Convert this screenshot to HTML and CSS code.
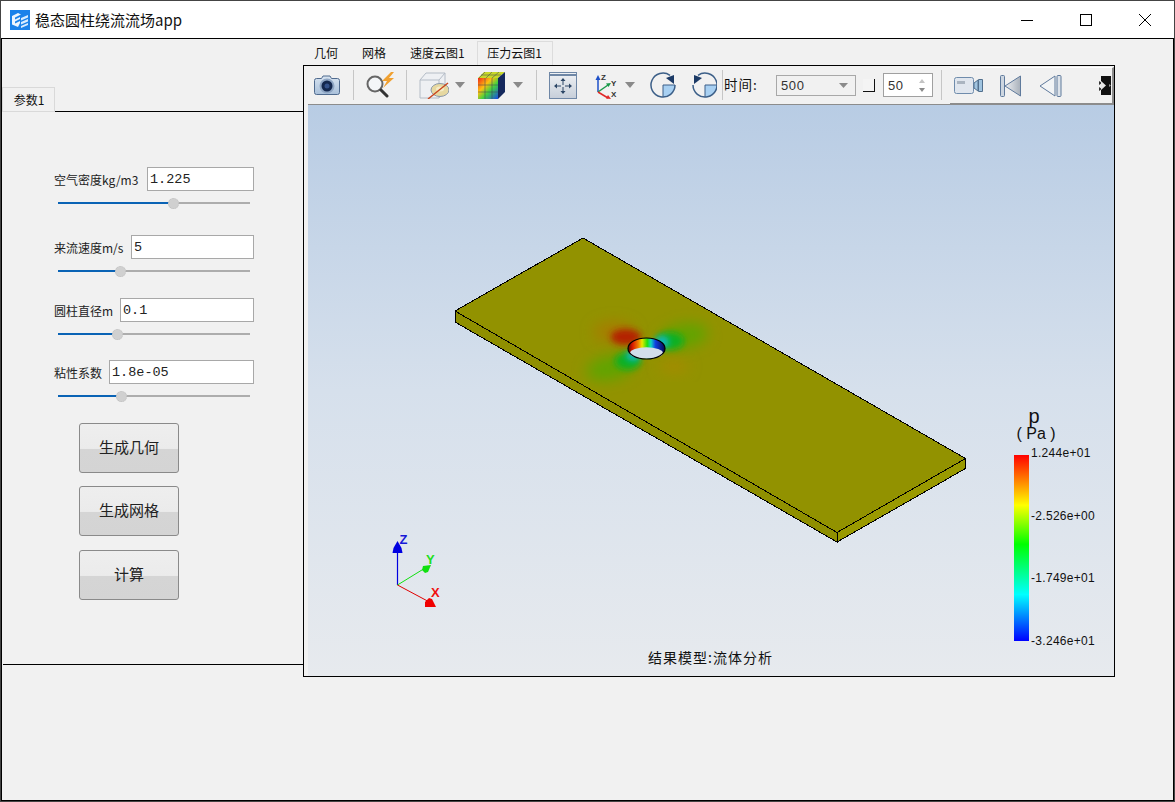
FILE: index.html
```html
<!DOCTYPE html>
<html lang="zh">
<head>
<meta charset="utf-8">
<title>稳态圆柱绕流流场app</title>
<link rel="stylesheet" href="styles.css">
</head>
<body>
<div class="app">
  <header class="titlebar">
    <svg class="app-icon" width="20" height="20" viewBox="0 0 20 20">
      <rect width="20" height="20" fill="#1b82ea"/>
      <path d="M2 6 8 3l3 1.500-6 3v2l5-2.500v2l-5 2.500v2l5-2.500v2L8 17l-6-2.500z" fill="#fff" opacity=".92"/>
      <path d="M11 8l7-3v2.500l-7 3zM11 12l7-3v2.500l-7 3zM11 16l7-3v2l-7 3z" fill="#d8ecff"/>
    </svg>
    <span class="app-title">稳态圆柱绕流流场app</span>
    <div class="win-btns">
      <div class="win-btn"><svg width="14" height="14" viewBox="0 0 14 14"><path d="M1 7.500h12" stroke="#000"/></svg></div>
      <div class="win-btn"><svg width="14" height="14" viewBox="0 0 14 14"><rect x="1.500" y="1.500" width="11" height="11" fill="none" stroke="#000"/></svg></div>
      <div class="win-btn"><svg width="14" height="14" viewBox="0 0 14 14"><path d="M1 1l12 12M13 1 1 13" stroke="#000"/></svg></div>
    </div>
  </header>

  <main class="client">
    <section class="left">
      <div class="tab left-tab">参数1</div>
      <div class="pane">
        <div class="group g-first">
          <div class="field"><label class="lbl lbl-a">空气密度kg/m3</label><input class="num" value="1.225"></div>
          <div class="slider"><div class="fill" style="width:59.9%"><span class="thumb"></span></div></div>
        </div>
        <div class="group g-2">
          <div class="field"><label class="lbl lbl-b">来流速度m/s</label><input class="num" value="5"></div>
          <div class="slider"><div class="fill" style="width:32.5%"><span class="thumb"></span></div></div>
        </div>
        <div class="group g-3">
          <div class="field"><label class="lbl lbl-c">圆柱直径m</label><input class="num" value="0.1"></div>
          <div class="slider"><div class="fill" style="width:30.7%"><span class="thumb"></span></div></div>
        </div>
        <div class="group g-4">
          <div class="field"><label class="lbl lbl-d">粘性系数</label><input class="num" value="1.8e-05"></div>
          <div class="slider"><div class="fill" style="width:32.8%"><span class="thumb"></span></div></div>
        </div>
        <div class="actions">
          <button class="btn">生成几何</button>
          <button class="btn">生成网格</button>
          <button class="btn btn-last">计算</button>
        </div>
      </div>
    </section>

    <section class="right">
      <nav class="tabs">
        <div class="tab top-tab">几何</div>
        <div class="tab top-tab">网格</div>
        <div class="tab top-tab">速度云图1</div>
        <div class="tab top-tab active">压力云图1</div>
      </nav>
      <div class="frame">
        <div class="toolbar">
          <svg class="m5" width="28" height="21" viewBox="0 0 28 21">
            <defs><linearGradient id="cb" x1="0" y1="0" x2="0" y2="1"><stop offset="0" stop-color="#d7e3f0"/><stop offset="1" stop-color="#a9c0da"/></linearGradient></defs>
            <path d="M1.500 5.500q0-2 2-2h5l1.500-2.500h7l1.500 2.500h6q2 0 2 2v12q0 2-2 2h-21q-2 0-2-2z" fill="url(#cb)" stroke="#4f6a8e"/>
            <circle cx="14" cy="11" r="7.500" fill="#8fa6c4"/><circle cx="14" cy="11" r="5.500" fill="#14284e"/><circle cx="14" cy="11" r="2.500" fill="#34528a"/>
          </svg>
          <span class="sep m12"></span>
          <svg class="m11" width="30" height="26" viewBox="0 0 30 26">
            <circle cx="10" cy="12" r="7.500" fill="#f4f6f8" stroke="#666" stroke-width="2"/>
            <path d="M16 18l6 6" stroke="#333" stroke-width="3" stroke-linecap="round"/>
            <path d="M26 0l-9 9h5l-4 7 11-10h-5l5-6z" fill="#f0a030"/>
          </svg>
          <span class="sep m11"></span>
          <svg class="m12" width="30" height="27" viewBox="0 0 30 27">
            <path d="M1 8l6-7h19v17l-6 8H1z" fill="#eef0f3" stroke="#b4bcc6"/>
            <path d="M1 8h19v18M20 8l6-7" fill="none" stroke="#b4bcc6"/>
            <ellipse cx="21" cy="18" rx="9" ry="6.500" fill="#e6d8a0" stroke="#8a98a8"/>
            <ellipse cx="21" cy="17" rx="4" ry="2.500" fill="#f4ecc8"/>
            <path d="M9 27 29 11" stroke="#c8441c" stroke-width="1.400"/>
          </svg>
          <svg class="m6" width="10" height="6" viewBox="0 0 10 6"><path d="M0 0h10L5 6z" fill="#8a8a8a"/></svg>
          <svg class="m13" width="27" height="27" viewBox="0 0 27 27">
            <defs><linearGradient id="cc" x1="0" y1="0" x2="1" y2="1"><stop offset="0" stop-color="#f02818"/><stop offset=".35" stop-color="#ffc010"/><stop offset=".6" stop-color="#40d040"/><stop offset="1" stop-color="#1848e8"/></linearGradient></defs>
            <path d="M0 6h20v21H0z" fill="url(#cc)"/>
            <path d="M0 6l6-6h21L20 6z" fill="#c8d828"/>
            <path d="M20 6l7-6v20l-7 7z" fill="#14285c"/>
            <path d="M7 0 1 6M14 0 8 6M21 0l-7 6M3 3h20M7 6v21M14 6v21M0 13h20M0 20h20" stroke="#3a4258" stroke-width=".5" fill="none"/>
          </svg>
          <svg class="m8" width="10" height="6" viewBox="0 0 10 6"><path d="M0 0h10L5 6z" fill="#8a8a8a"/></svg>
          <span class="sep m13"></span>
          <svg class="m12" width="28" height="27" viewBox="0 0 28 27">
            <defs><linearGradient id="fb" x1="0" y1="0" x2="0" y2="1"><stop offset="0" stop-color="#f0f2f5"/><stop offset="1" stop-color="#c6ced9"/></linearGradient></defs>
            <rect x=".5" y=".5" width="27" height="26" fill="url(#fb)" stroke="#6f87a6"/>
            <path d="M1 3h26" stroke="#6f87a6" stroke-width="2"/>
            <path d="M14 8v5M14 15v5M7 14h5M16 14h5" stroke="#2c4666"/>
            <path d="M14 6l-2.500 3h5zM14 22l-2.500-3h5zM5 14l3-2.500v5zM23 14l-3-2.500v5z" fill="#2c4666"/>
          </svg>
          <svg class="m18" width="25" height="27" viewBox="0 0 25 27">
            <path d="M3 20V6" stroke="#1e50c8" stroke-width="1.500"/><path d="M3 3 .5 8h5z" fill="#1e50c8"/>
            <path d="M3 20 13 13" stroke="#1a9a4a" stroke-width="1.500"/><path d="M16 11l-5 .5 2.500 3.500z" fill="#1a9a4a"/>
            <path d="M3 20l10 6" stroke="#e02828" stroke-width="1.500"/><path d="M16 27l-5-.5 2-3.500z" fill="#e02828"/>
            <text class="tiny" x="6" y="8">Z</text><text class="tiny" x="16" y="14">Y</text><text class="tiny" x="16" y="25">X</text>
          </svg>
          <svg class="m5" width="10" height="6" viewBox="0 0 10 6"><path d="M0 0h10L5 6z" fill="#8a8a8a"/></svg>
          <svg class="m15" width="26" height="26" viewBox="0 0 26 26">
            <path d="M13 13h12a12 12 0 0 1-12 12z" fill="#a8d0f2"/>
            <path d="M13 13h12M13 13v12" stroke="#3c5f88"/>
            <path d="M20 3.300A12 12 0 1 0 25 13" fill="none" stroke="#3c5f88" stroke-width="1.500"/>
            <path d="M24 3v9l-8-6z" fill="#1c3a66"/>
          </svg>
          <svg class="m14" width="27" height="26" viewBox="0 0 27 26">
            <path d="M15 13h12a12 12 0 0 1-12 12z" fill="#a8d0f2"/>
            <path d="M15 13v12M15 13h12" stroke="#3c5f88"/>
            <path d="M8 3.300A12 12 0 1 1 3 13" fill="none" stroke="#3c5f88" stroke-width="1.500"/>
            <path d="M4 3v9l8-6z" fill="#1c3a66"/>
          </svg>
          <span class="sep m5"></span>
          <span class="time-label">时间:</span>
          <div class="combo"><span>500</span><svg width="9" height="5" viewBox="0 0 9 5"><path d="M0 0h9L4.500 5z" fill="#8a8a8a"/></svg></div>
          <span class="check"></span>
          <div class="spin"><span>50</span>
            <svg width="8" height="13" viewBox="0 0 8 13"><path d="M4 0l3 4H1z" fill="#c4c4c4"/><path d="M4 13 1 9h6z" fill="#8a8a8a"/></svg>
          </div>
          <span class="sep m8"></span>
          <div class="subbar">
            <svg class="m4" width="30" height="17" viewBox="0 0 30 17">
              <rect x=".5" y=".5" width="19" height="16" rx="2" fill="#e0e6ee" stroke="#6f8cac"/>
              <rect x="3" y="4" width="8" height="3" fill="#aab4c0"/>
              <path d="M20 6l4-3v11l-4-3zM24.500 2.500h4v12h-4z" fill="#a0c4e0" stroke="#52708e"/>
            </svg>
            <svg class="m16" width="21" height="22" viewBox="0 0 21 22">
              <defs><linearGradient id="pv" x1="0" y1="0" x2="1" y2="0"><stop offset="0" stop-color="#eef0f3"/><stop offset="1" stop-color="#a8b0ba"/></linearGradient></defs>
              <rect x=".5" y=".5" width="4" height="21" rx="1" fill="#cdd6e0" stroke="#5f7a9c"/>
              <path d="M5 11 20.500 1v20z" fill="url(#pv)" stroke="#5f7a9c"/>
            </svg>
            <svg class="m18" width="23" height="22" viewBox="0 0 23 22">
              <path d="M1 11 16 1v20z" fill="#f2f4f6" stroke="#5f7a9c"/>
              <rect x="18" y=".5" width="4" height="21" rx="1" fill="#dde3ea" stroke="#5f7a9c"/>
            </svg>
            <svg class="m37" width="12" height="19" viewBox="0 0 12 19">
              <rect x="2" width="10" height="19" fill="#111"/>
              <path d="M0 5l3 2-3 2zM0 11l3 2-3 2z" fill="#333"/>
              <path d="M2 5l5 4.500-5 4.500z" fill="#e8e8e8"/>
              <path d="M10 8l2 1.500-2 1.500z" fill="#999"/>
            </svg>
          </div>
        </div>
        <div class="viewport">
          <svg class="scene" width="806" height="571" viewBox="308 105 806 571">
            <defs>
              <clipPath id="plate"><path d="M583 238 965.500 458.500 837 532.500 455 311z"/></clipPath>
              <filter id="b5" x="-80%" y="-80%" width="260%" height="260%"><feGaussianBlur stdDeviation="7"/></filter>
              <filter id="b3" x="-80%" y="-80%" width="260%" height="260%"><feGaussianBlur stdDeviation="3"/></filter>
              <linearGradient id="wall" x1="628" x2="665" y1="0" y2="0" gradientUnits="userSpaceOnUse">
                <stop offset="0" stop-color="#5a0c00"/><stop offset=".12" stop-color="#d81800"/><stop offset=".28" stop-color="#f08000"/><stop offset=".38" stop-color="#e8e800"/>
                <stop offset=".52" stop-color="#20e010"/><stop offset=".62" stop-color="#10d8c0"/><stop offset=".74" stop-color="#1040e0"/><stop offset="1" stop-color="#060a50"/>
              </linearGradient>
            </defs>
            <path d="M455 311v11l382 220v-9.500z" fill="#8f8f00" stroke="#000" shape-rendering="crispEdges"/>
            <path d="M837 532.500v9.500l128.500-73.500v-10z" fill="#9a9a00" stroke="#000" shape-rendering="crispEdges"/>
            <path d="M583 238 965.500 458.500 837 532.500 455 311z" fill="#929200"/>
            <g clip-path="url(#plate)">
              <ellipse cx="674" cy="366" rx="14" ry="6" fill="#a88a00" filter="url(#b5)"/>
              <ellipse cx="614" cy="332" rx="20" ry="10" fill="#a87c00" filter="url(#b5)"/>
              <ellipse cx="684" cy="336" rx="24" ry="12" fill="#60a400" filter="url(#b5)" transform="rotate(-10 684 336)"/>
              <ellipse cx="610" cy="368" rx="24" ry="12" fill="#60a400" filter="url(#b5)" transform="rotate(-12 610 368)"/>
              <ellipse cx="626" cy="337" rx="15" ry="8" fill="#b42400" filter="url(#b3)"/>
              <ellipse cx="670" cy="341" rx="14" ry="9" fill="#10b020" filter="url(#b3)"/>
              <ellipse cx="628" cy="361" rx="13" ry="9" fill="#10b020" filter="url(#b3)"/>
              <ellipse cx="662" cy="342" rx="7" ry="6" fill="#10b8c8" filter="url(#b3)"/>
              <ellipse cx="633" cy="356" rx="7" ry="5" fill="#10b8c8" filter="url(#b3)"/>
            </g>
            <path d="M583 238 965.500 458.500 837 532.500 455 311z" fill="none" stroke="#000" shape-rendering="crispEdges"/>
            <ellipse cx="646.500" cy="348.500" rx="18.500" ry="10.500" fill="url(#wall)"/>
            <ellipse cx="646.500" cy="353" rx="16.500" ry="5.800" fill="#d3deea"/>
            <ellipse cx="646.500" cy="348.500" rx="18.500" ry="10.500" fill="none" stroke="#000" stroke-width="1.200"/>
            <path d="M397.500 585v-34" stroke="#0000e0" stroke-width="1.200"/>
            <path d="M397.500 541l-4 7-1 5h10l-1-5z" fill="#0000e0"/>
            <path d="M397.500 585l26-16" stroke="#10e010"/>
            <path d="M431 565l-8 1-1 4 3 3 3-1z" fill="#10e010"/>
            <path d="M397.500 585l30 16" stroke="#e00000"/>
            <path d="M436 607h-11l0-5 4-4 3 1z" fill="#f00000"/>
            <text class="axis" x="399.500" y="544" fill="#1818d8">Z</text>
            <text class="axis" x="426" y="564" fill="#20e020">Y</text>
            <text class="axis" x="431" y="597" fill="#f01010">X</text>
          </svg>
          <div class="legend">
            <div class="legend-title"><span class="legend-p">p</span><span class="legend-unit">( Pa )</span></div>
            <div class="legend-bar"></div>
            <div class="legend-labels">
              <span>1.244e+01</span>
              <span>-2.526e+00</span>
              <span>-1.749e+01</span>
              <span>-3.246e+01</span>
            </div>
          </div>
          <div class="caption">结果模型:流体分析</div>
        </div>
      </div>
    </section>
  </main>
</div>
</body>
</html>
```
FILE: styles.css
```css
* { box-sizing: border-box; }
html, body { margin: 0; padding: 0; }
body { font-family: "Noto Sans CJK SC", "Liberation Sans", sans-serif; font-size: 12px; color: #111; background: #f1f1f1; overflow: hidden; }

.app { width: 1175px; height: 802px; border: 1px solid #444; display: flex; flex-direction: column; }

.titlebar { height: 37px; background: #fff; display: flex; align-items: center; flex: none; }
.app-icon { margin-left: 9px; flex: none; }
.app-title { margin-left: 5px; font-size: 15px; color: #111; }
.win-btns { margin-left: auto; display: flex; height: 100%; }
.win-btn { width: 59px; display: flex; align-items: center; justify-content: center; }

.client { flex: 1; display: flex; border: 1px solid #000; background: #f1f1f1; min-height: 0; }

.left { width: 301px; flex: none; padding-top: 48px; }
.tab { background: #f1f1f1; font-size: 12px; display: flex; align-items: center; justify-content: center; height: 24px; white-space: nowrap; }
.left-tab { position: relative; width: 53px; height: 25px; margin-bottom: -1px; border: 1px solid #d9d9d9; padding: 0 0 1px 1px; }
.pane { height: 554px; margin-left: 1px; border-top: 1px solid #000; border-bottom: 1px solid #000; padding: 55px 49px 0 51px; }

.group { display: flex; flex-direction: column; }
.g-2 { margin-top: 24px; }
.g-3 { margin-top: 19px; }
.g-4 { margin-top: 18px; }
.field { display: flex; align-items: center; height: 24px; }
.lbl { flex: none; font-size: 12px; color: #222; white-space: nowrap; }
.lbl-a { width: 93px; }
.lbl-b { width: 77px; }
.lbl-c { width: 66px; }
.lbl-d { width: 55px; }
.num { flex: 1; min-width: 0; height: 24px; border: 1px solid #a8a8a8; background: #fff; font-family: "Liberation Mono", monospace; font-size: 13.5px; color: #222; padding: 1px 2px 0; outline: 0; border-radius: 0; }

.slider { margin: 11px 4px 7px; height: 2px; background: #adadad; position: relative; width: 192px; }
.fill { height: 100%; background: #0a63b5; position: relative; }
.thumb { position: absolute; right: -6px; top: -4px; width: 11px; height: 11px; border-radius: 50%; background: #d0d0d0; border: 1px dotted #c0c0c0; }

.actions { display: flex; flex-direction: column; margin: 19px 0 0 25px; }
.btn { width: 100px; height: 50px; margin-bottom: 13px; border: 1px solid #8a8a8a; border-radius: 3px; font-family: inherit; font-size: 15px; color: #222; padding: 0 0 3px; background: linear-gradient(#eeeeee 0, #ebebeb 51%, #d5d5d5 52%, #d4d4d4 100%); }
.actions .btn:nth-child(2) { margin-bottom: 14px; }
.btn-last { margin-bottom: 0; }

.right { flex: 1; padding-top: 2px; min-width: 0; }
.tabs { display: flex; height: 24px; }
.top-tab { padding: 0 13px 2px 11px; }
.active { width: 76px; padding: 0 0 2px; border: 1px solid #dcdcdc; border-bottom: 0; margin-left: -1px; }
.frame { width: 812px; height: 612px; border: 1px solid #000; padding-left: 4px; display: flex; flex-direction: column; }

.toolbar { height: 39px; flex: none; border-bottom: 1px solid #8c8c8c; display: flex; align-items: center; background: #f1f1f1; }
.toolbar > svg, .subbar > svg { flex: none; display: block; }
.sep { width: 1px; height: 30px; background: #c6c6c6; flex: none; }
.m4 { margin-left: 4px; }
.m5 { margin-left: 5px; }
.m6 { margin-left: 6px; }
.m8 { margin-left: 8px; }
.m11 { margin-left: 11px; }
.m12 { margin-left: 12px; }
.m13 { margin-left: 13px; }
.m14 { margin-left: 14px; }
.m15 { margin-left: 15px; }
.m16 { margin-left: 16px; }
.m18 { margin-left: 18px; }
.m37 { margin-left: 37px; }
.tiny { font: bold 8px "Liberation Sans", sans-serif; fill: #333; }

.time-label { margin-left: 1px; width: 38px; font-size: 13.5px; letter-spacing: 1px; white-space: nowrap; color: #111; padding-bottom: 2px; }
.combo { margin-left: 14px; width: 80px; height: 21px; border: 1px solid #a8a8a8; display: flex; align-items: center; justify-content: space-between; padding: 0 7px 0 4px; font-family: "Liberation Sans", sans-serif; font-size: 13px; color: #333; letter-spacing: .6px; }
.check { margin-left: 7px; width: 12px; height: 13px; flex: none; background: #f4f4f4; border-right: 1px solid #111; border-bottom: 1px solid #111; }
.spin { margin-left: 8px; width: 50px; height: 24px; background: #fff; border: 1px solid #a0a0a0; display: flex; align-items: center; justify-content: space-between; padding: 0 6px 0 4px; font-family: "Liberation Sans", sans-serif; font-size: 13px; color: #333; letter-spacing: .6px; }
.subbar { margin-left: 8px; flex: 1; height: 37px; display: flex; align-items: center; border-top: 1px solid #fff; border-right: 2px solid #8c8c8c; border-bottom: 1px solid #8c8c8c; margin-top: 1px; min-width: 0; overflow: hidden; }

.viewport { position: relative; flex: 1; background: linear-gradient(#b8cce4 0, #d6e0ec 50%, #e7eaee 100%); overflow: hidden; }
.scene { position: absolute; left: 0; top: 0; display: block; }
.axis { font: bold 13px "Liberation Sans", sans-serif; }

.legend { position: absolute; left: 706px; top: 305px; width: 100px; height: 245px; }
.legend-title { position: absolute; left: 0; top: -3px; width: 44px; display: flex; flex-direction: column; align-items: center; font-family: "Liberation Sans", sans-serif; color: #111; }
.legend-p { font-size: 20px; line-height: 18px; padding-right: 4px; }
.legend-unit { font-size: 16px; line-height: 17px; white-space: nowrap; }
.legend-bar { position: absolute; left: 0; top: 45px; width: 15px; height: 186px; background: linear-gradient(#ff0000 0, #ffff00 27%, #00ff00 48%, #00ffff 75%, #0000ff 100%); }
.legend-labels { position: absolute; left: 17px; top: 36px; height: 202px; display: flex; flex-direction: column; justify-content: space-between; font-family: "Liberation Sans", sans-serif; font-size: 12px; letter-spacing: .3px; line-height: 14px; color: #111; }

.caption { position: absolute; left: 340px; top: 542px; font-size: 14px; letter-spacing: 1px; color: #111; white-space: nowrap; }
```
